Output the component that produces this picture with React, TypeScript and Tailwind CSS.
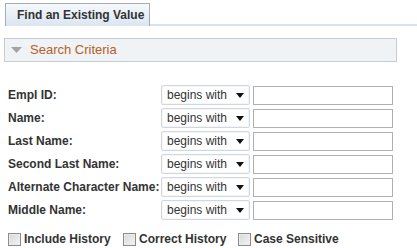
import React from "react";

const FIELDS = [
  "Empl ID:",
  "Name:",
  "Last Name:",
  "Second Last Name:",
  "Alternate Character Name:",
  "Middle Name:",
];

const OPTIONS = [
  { label: "Include History", width: "w-[115px]" },
  { label: "Correct History", width: "w-[115px]" },
  { label: "Case Sensitive", width: "w-auto" },
];

const Operator = () => (
  <div className="flex h-[20px] w-[89px] items-center justify-between rounded-[2px] border border-[#cfd7df] bg-white pl-[5px] pr-[4px] text-[12px] text-[#333333] shadow-[inset_0_0_0_1px_#f4f6f8]">
    <span>begins with</span>
    <svg width="8" height="5" viewBox="0 0 8 5" className="mr-[1px]">
      <path d="M0 0 H8 L4 5 Z" fill="#111111" />
    </svg>
  </div>
);

const Checkbox = () => (
  <span className="inline-block h-[13px] w-[13px] border border-[#8c8c8c] bg-gradient-to-br from-[#d8d8d8] to-[#f4f4f4] shadow-[inset_0_0_0_1px_#ececec]" />
);

export default function App() {
  return (
    <div className="relative h-[248px] w-[417px] overflow-hidden bg-white font-['Liberation_Sans',Arial,sans-serif]">
      {/* Tab strip */}
      <div className="flex items-end pt-[3px]">
        <div className="ml-[5px] flex h-[23px] w-[145px] items-center border border-b-0 border-[#a4acb6] bg-gradient-to-b from-[#f6f9fc] to-[#dbe5f1] pl-[11px] text-[12px] font-bold text-[#333333]">
          Find an Existing Value
        </div>
        <div className="h-[2px] flex-1 bg-[#d6e2f0]" />
      </div>

      {/* Section header */}
      <div className="ml-[4px] mt-[12px] flex h-[24px] w-[393px] items-center border border-[#c6ccd3] bg-[#eff3f5]">
        <svg width="11" height="6" viewBox="0 0 11 6" className="ml-[6px]">
          <path d="M0 0 H11 L5.5 6 Z" fill="#a3a3a3" />
        </svg>
        <span className="ml-[8px] text-[13px] text-[#b5601f]">Search Criteria</span>
      </div>

      {/* Criteria rows */}
      <div className="mt-[23px] flex flex-col gap-[3px]">
        {FIELDS.map((f) => (
          <div key={f} className="flex h-[20px] items-center">
            <label className="w-[161px] pl-[8px] text-[12px] font-bold text-[#333333]">{f}</label>
            <Operator />
            <input
              className="ml-[3px] h-[19px] w-[140px] border border-[#b0b0b0] bg-white text-[12px] outline-none"
              defaultValue=""
            />
          </div>
        ))}
      </div>

      {/* Options */}
      <div className="mt-[10px] flex items-center pl-[8px]">
        {OPTIONS.map((o) => (
          <div key={o.label} className={`flex items-center gap-[3px] ${o.width}`}>
            <Checkbox />
            <span className="text-[12px] font-bold text-[#333333]">{o.label}</span>
          </div>
        ))}
      </div>
    </div>
  );
}
